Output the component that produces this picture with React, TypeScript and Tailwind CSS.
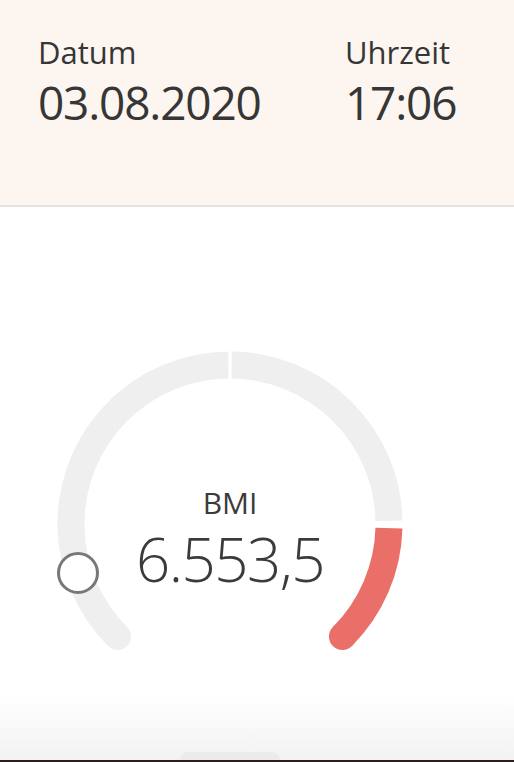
import React from 'react'

const CX = 180
const CY = 180
const R = 159

// point on the gauge circle, angle in degrees (0 = right, counter-clockwise)
const pt = (deg: number) => {
	const a = (deg * Math.PI) / 180
	return [CX + R * Math.cos(a), CY - R * Math.sin(a)]
}

// arc going clockwise from angle `from` down to angle `to`
const arc = (from: number, to: number) => {
	const [x1, y1] = pt(from)
	const [x2, y2] = pt(to)
	const large = from - to > 180 ? 1 : 0
	return `M ${x1} ${y1} A ${R} ${R} 0 ${large} 1 ${x2} ${y2}`
}

function Gauge() {
	const [ex, ey] = pt(-45)
	return (
		<div className="relative w-[360px] h-[320px] ml-[50px] mt-[137px]">
			<svg width="360" height="320" viewBox="0 0 360 320" className="absolute inset-0">
				<path d={arc(225, 181.5)} stroke="#efefef" strokeWidth="27" fill="none" strokeLinecap="round" />
				<path d={arc(180.5, 90.6)} stroke="#efefef" strokeWidth="27" fill="none" />
				<path d={arc(89.4, 1.2)} stroke="#efefef" strokeWidth="27" fill="none" />
				<path d={arc(-1.5, -45)} stroke="#ea6f69" strokeWidth="27" fill="none" />
				<circle cx={ex} cy={ey} r="13.5" fill="#ea6f69" />
				<circle cx="28" cy="229" r="19.5" fill="#fff" stroke="#787878" strokeWidth="3" />
			</svg>
			<div className="absolute left-0 right-0 top-[144px] flex flex-col items-center text-[#3b3b3b]">
				<span className="text-[30px] leading-none">BMI</span>
				<span className="mt-[11px] text-[60px] font-light leading-none tracking-[-1.5px]">6.553,5</span>
			</div>
		</div>
	)
}

export default function App() {
	return (
		<div
			className="relative w-[514px] h-[762px] overflow-hidden bg-white flex flex-col"
			style={{ fontFamily: '"Open Sans", "Noto Sans", sans-serif' }}
		>
			<div className="h-[207px] shrink-0 bg-[#fdf5ef] border-b-2 border-[#e3e3e3] flex px-[38px] pt-[37px] text-[#363636]">
				<div className="w-[307px] flex flex-col">
					<span className="text-[31px] leading-none">Datum</span>
					<span className="mt-[11px] text-[46px] leading-none tracking-[-1.2px]">03.08.2020</span>
				</div>
				<div className="flex flex-col">
					<span className="text-[31px] leading-none">Uhrzeit</span>
					<span className="mt-[11px] text-[46px] leading-none tracking-[-1.2px]">17:06</span>
				</div>
			</div>
			<Gauge />
			<div className="absolute left-0 right-0 bottom-0 h-[70px] bg-gradient-to-b from-white/0 to-[#f2f2f2]">
				<div className="absolute left-[180px] bottom-[2px] w-[100px] h-[8px] rounded-t-full bg-[#ebebeb]" />
				<div className="absolute left-0 right-0 bottom-0 h-[2px] bg-[#2d1c1c]" />
			</div>
		</div>
	)
}
